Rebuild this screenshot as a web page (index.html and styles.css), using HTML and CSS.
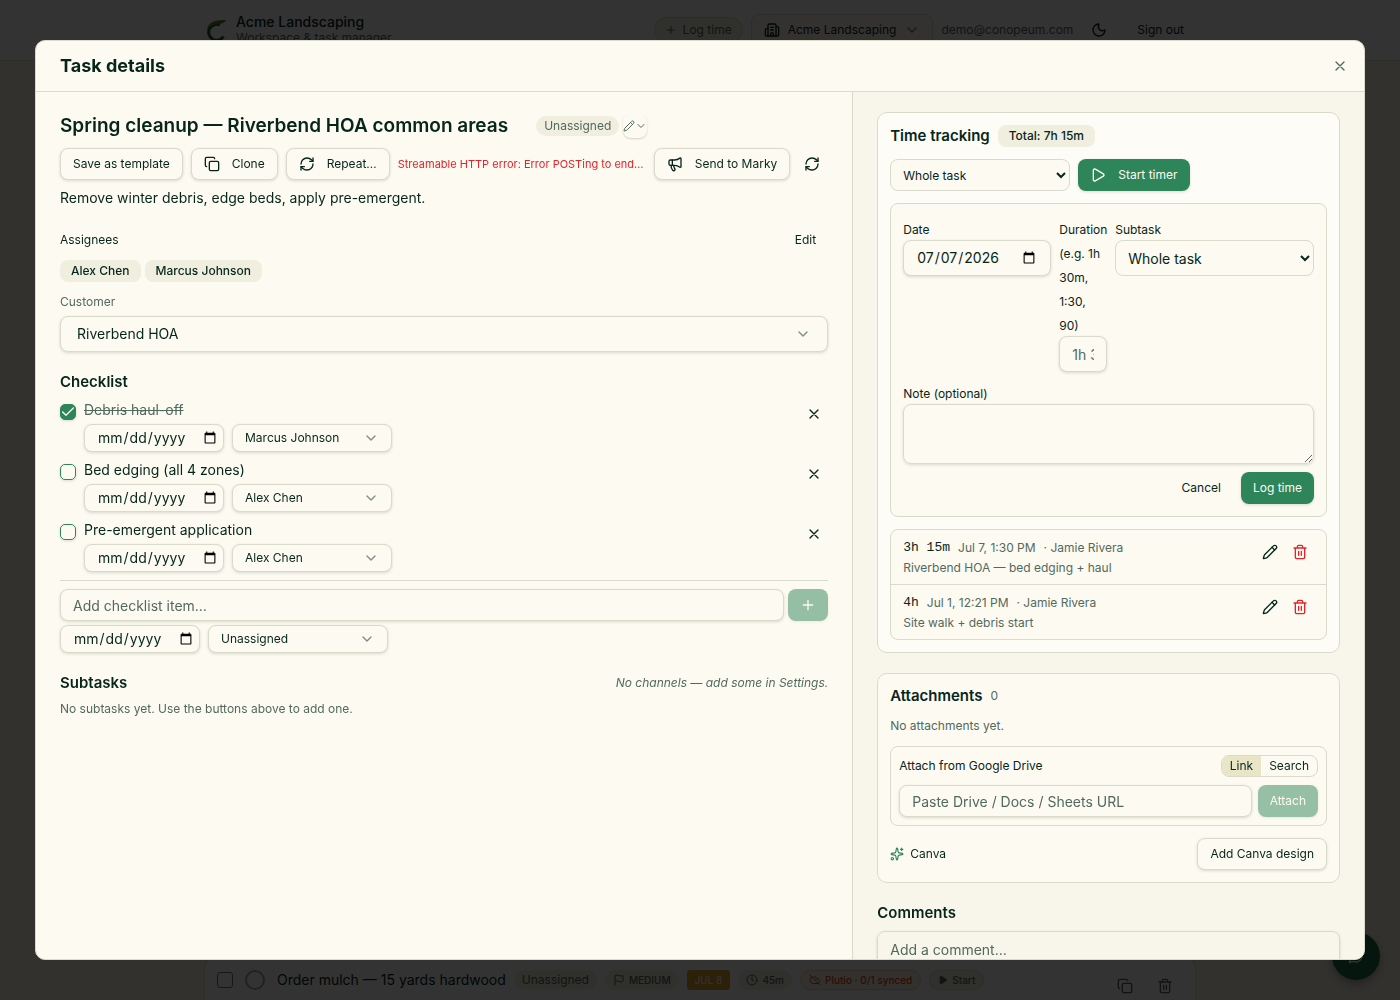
FILE: index.html
```html
<!DOCTYPE html>
<html lang="en">
<head>
<meta charset="utf-8">
<meta name="viewport" content="width=device-width, initial-scale=1">
<title>Task details</title>
<link rel="stylesheet" href="styles.css">
</head>
<body>
<svg class="sprite" aria-hidden="true">
  <symbol id="plus" viewBox="0 0 24 24"><path d="M5 12h14M12 5v14"/></symbol>
  <symbol id="x" viewBox="0 0 24 24"><path d="M18 6 6 18M6 6l12 12"/></symbol>
  <symbol id="chevron" viewBox="0 0 24 24"><path d="m6 9 6 6 6-6"/></symbol>
  <symbol id="copy" viewBox="0 0 24 24"><rect x="8" y="8" width="14" height="14" rx="2"/><path d="M4 16c-1.100 0-2-.9-2-2V4c0-1.100.9-2 2-2h10c1.100 0 2 .9 2 2"/></symbol>
  <symbol id="refresh" viewBox="0 0 24 24"><path d="M3 12a9 9 0 0 1 9-9 9.750 9.750 0 0 1 6.740 2.740L21 8"/><path d="M21 3v5h-5"/><path d="M21 12a9 9 0 0 1-9 9 9.750 9.750 0 0 1-6.740-2.740L3 16"/><path d="M8 16H3v5"/></symbol>
  <symbol id="megaphone" viewBox="0 0 24 24"><path d="M11 6a13 13 0 0 0 8.400-2.800A1 1 0 0 1 21 4v12a1 1 0 0 1-1.600.8A13 13 0 0 0 11 14H5a2 2 0 0 1-2-2V8a2 2 0 0 1 2-2z"/><path d="M6 14a12 12 0 0 0 2.400 7.200 2 2 0 0 0 3.200-2.400A8 8 0 0 1 10 14"/><path d="M8 6v8"/></symbol>
  <symbol id="pencil" viewBox="0 0 24 24"><path d="M21.174 6.812a1 1 0 0 0-3.986-3.987L3.842 16.174a2 2 0 0 0-.5.830l-1.321 4.352a.5.5 0 0 0 .623.622l4.353-1.320a2 2 0 0 0 .830-.497z"/><path d="m15 5 4 4"/></symbol>
  <symbol id="trash" viewBox="0 0 24 24"><path d="M3 6h18M19 6v14a2 2 0 0 1-2 2H7a2 2 0 0 1-2-2V6M8 6V4a2 2 0 0 1 2-2h4a2 2 0 0 1 2 2v2M10 11v6M14 11v6"/></symbol>
  <symbol id="play" viewBox="0 0 24 24"><path d="M5 5a2 2 0 0 1 3.008-1.728l11.997 6.998a2 2 0 0 1 .003 3.458l-12 7A2 2 0 0 1 5 19z"/></symbol>
  <symbol id="sparkles" viewBox="0 0 24 24"><path d="M11.017 2.814a1 1 0 0 1 1.966 0l1.051 5.558a2 2 0 0 0 1.594 1.594l5.558 1.051a1 1 0 0 1 0 1.966l-5.558 1.051a2 2 0 0 0-1.594 1.594l-1.051 5.558a1 1 0 0 1-1.966 0l-1.051-5.558a2 2 0 0 0-1.594-1.594l-5.558-1.051a1 1 0 0 1 0-1.966l5.558-1.051a2 2 0 0 0 1.594-1.594z"/><path d="M20 2v4M22 4h-4"/><circle cx="4" cy="20" r="2"/></symbol>
  <symbol id="building" viewBox="0 0 24 24"><path d="M10 12h4M10 8h4M14 21v-3a2 2 0 0 0-4 0v3"/><path d="M6 10H4a2 2 0 0 0-2 2v7a2 2 0 0 0 2 2h16a2 2 0 0 0 2-2V9a2 2 0 0 0-2-2h-2"/><path d="M6 21V5a2 2 0 0 1 2-2h8a2 2 0 0 1 2 2v16"/></symbol>
  <symbol id="moon" viewBox="0 0 24 24"><path d="M20.985 12.486a9 9 0 1 1-9.473-9.472c.405-.022.617.460.402.803a6 6 0 0 0 8.268 8.268c.344-.215.825-.004.803.401"/></symbol>
  <symbol id="flag" viewBox="0 0 24 24"><path d="M4 22V4a1 1 0 0 1 .4-.8A6 6 0 0 1 8 2c3 0 5 2 7.333 2q2 0 3.067-.8A1 1 0 0 1 20 4v10a1 1 0 0 1-.4.8A6 6 0 0 1 16 16c-3 0-5-2-8-2a6 6 0 0 0-4 1.528"/></symbol>
  <symbol id="clock" viewBox="0 0 24 24"><circle cx="12" cy="12" r="10"/><path d="M12 6v6l4 2"/></symbol>
  <symbol id="cloud-off" viewBox="0 0 24 24"><path d="m2 2 20 20M5.782 5.782A7 7 0 0 0 9 19h8.500a4.500 4.500 0 0 0 1.307-.193M21.532 16.500A4.500 4.500 0 0 0 17.500 10h-1.790A7.008 7.008 0 0 0 10 5.070"/></symbol>
  <symbol id="chat" viewBox="0 0 24 24"><path d="M7.900 20A9 9 0 1 0 4 16.100L2 22Z"/></symbol>
</svg>

<div class="page">
  <header class="topbar">
    <div class="topbar-inner">
      <svg class="logo" viewBox="0 0 22 24" aria-hidden="true"><path d="M17.500 18.500A8 8 0 1 1 14 7" fill="none" stroke="#1b5638" stroke-width="3"/><path d="M1 12C2 4 9 2 20 2c-2 4-6 4-10 4.500C6 7 3 9 1 12z" fill="#5b7d2c"/></svg>
      <div class="brand"><strong>Acme Landscaping</strong><span>Workspace &amp; task manager</span></div>
      <button class="pill-btn"><svg class="icon s12"><use href="#plus"/></svg>Log time</button>
      <button class="org-btn"><svg class="icon"><use href="#building"/></svg>Acme Landscaping<svg class="icon faint"><use href="#chevron"/></svg></button>
      <span class="email">demo@conopeum.com</span>
      <button class="icon-btn moon" aria-label="Dark mode"><svg class="icon"><use href="#moon"/></svg></button>
      <button class="ghost">Sign out</button>
    </div>
  </header>
  <main class="board">
    <div class="task-row">
      <input type="checkbox" class="plain-check" aria-label="Select task">
      <input type="radio" class="ring" aria-label="Complete task">
      <span class="task-name">Order mulch — 15 yards hardwood</span>
      <span class="tag big">Unassigned</span>
      <span class="tag"><svg class="icon s12"><use href="#flag"/></svg>MEDIUM</span>
      <span class="tag due">JUL 8</span>
      <span class="tag"><svg class="icon s12"><use href="#clock"/></svg>45m</span>
      <span class="tag sync"><svg class="icon s12"><use href="#cloud-off"/></svg>Plutio · 0/1 synced</span>
      <button class="tag start"><svg class="icon s10 solid"><use href="#play"/></svg>Start</button>
      <span class="row-tools">
        <button class="icon-btn" aria-label="Duplicate"><svg class="icon"><use href="#copy"/></svg></button>
        <button class="icon-btn" aria-label="Delete"><svg class="icon"><use href="#trash"/></svg></button>
      </span>
    </div>
  </main>
  <button class="fab" aria-label="Chat"><svg class="icon"><use href="#chat"/></svg></button>
</div>

<div class="overlay">
  <section class="modal" role="dialog" aria-modal="true" aria-labelledby="dialog-title">
    <header class="modal-head">
      <h2 id="dialog-title">Task details</h2>
      <button class="close" aria-label="Close"><svg class="icon"><use href="#x"/></svg></button>
    </header>
    <div class="modal-body">
      <div class="main-col">
        <div class="title-row">
          <h2>Spring cleanup — Riverbend HOA common areas</h2>
          <div class="assign">
            <span class="badge">Unassigned</span>
            <button class="mini" aria-label="Change assignee"><svg class="icon s12"><use href="#pencil"/></svg><svg class="icon s12"><use href="#chevron"/></svg></button>
          </div>
        </div>
        <div class="actions">
          <button class="btn">Save as template</button>
          <button class="btn"><svg class="icon"><use href="#copy"/></svg>Clone</button>
          <button class="btn"><svg class="icon"><use href="#refresh"/></svg>Repeat…</button>
          <span class="error">Streamable HTTP error: Error POSTing to end…</span>
          <button class="btn push"><svg class="icon"><use href="#megaphone"/></svg>Send to Marky</button>
          <button class="icon-btn wide" aria-label="Refresh"><svg class="icon"><use href="#refresh"/></svg></button>
        </div>
        <p class="desc">Remove winter debris, edge beds, apply pre-emergent.</p>
        <div class="assignees">
          <span class="label">Assignees</span>
          <button class="ghost">Edit</button>
        </div>
        <div class="chips"><span class="chip">Alex Chen</span><span class="chip">Marcus Johnson</span></div>
        <label class="label muted customer-label" for="customer">Customer</label>
        <select id="customer" class="select large"><option>Riverbend HOA</option></select>

        <h3 class="checklist-title">Checklist</h3>
        <ul class="checklist">
          <li>
            <input type="checkbox" class="check" id="c1" checked>
            <div class="item"><label for="c1" class="done">Debris haul-off</label>
              <div class="pair"><input type="date" class="date" aria-label="Due date"><select class="select" aria-label="Assignee"><option>Marcus Johnson</option></select></div></div>
            <button class="icon-btn" aria-label="Remove"><svg class="icon"><use href="#x"/></svg></button>
          </li>
          <li>
            <input type="checkbox" class="check" id="c2">
            <div class="item"><label for="c2">Bed edging (all 4 zones)</label>
              <div class="pair"><input type="date" class="date" aria-label="Due date"><select class="select" aria-label="Assignee"><option>Alex Chen</option></select></div></div>
            <button class="icon-btn" aria-label="Remove"><svg class="icon"><use href="#x"/></svg></button>
          </li>
          <li>
            <input type="checkbox" class="check" id="c3">
            <div class="item"><label for="c3">Pre-emergent application</label>
              <div class="pair"><input type="date" class="date" aria-label="Due date"><select class="select" aria-label="Assignee"><option>Alex Chen</option></select></div></div>
            <button class="icon-btn" aria-label="Remove"><svg class="icon"><use href="#x"/></svg></button>
          </li>
        </ul>
        <div class="add-item">
          <div class="add-line">
            <input type="text" class="field" placeholder="Add checklist item…" aria-label="Add checklist item">
            <button class="btn primary add" disabled aria-label="Add"><svg class="icon"><use href="#plus"/></svg></button>
          </div>
          <div class="pair"><input type="date" class="date" aria-label="Due date"><select class="select mid" aria-label="Assignee"><option>Unassigned</option></select></div>
        </div>
        <div class="sub-head"><h3>Subtasks</h3><em>No channels — add some in Settings.</em></div>
        <p class="note">No subtasks yet. Use the buttons above to add one.</p>
      </div>

      <aside class="side-col">
        <section class="card time">
          <div class="card-head"><h3>Time tracking</h3><span class="chip">Total: 7h 15m</span></div>
          <div class="pair">
            <select class="native small" aria-label="Timer target"><option>Whole task</option></select>
            <button class="btn primary"><svg class="icon"><use href="#play"/></svg>Start timer</button>
          </div>
          <form class="panel log-form">
            <div class="log-grid">
              <div class="log-field"><label for="log-date">Date</label><input id="log-date" type="date" class="date tall" value="2026-07-07"></div>
              <div class="log-field"><label for="log-dur">Duration (e.g. 1h 30m, 1:30, 90)</label><input id="log-dur" type="text" class="field tall" placeholder="1h 30m"></div>
              <div class="log-field"><label for="log-sub">Subtask</label><select id="log-sub" class="native"><option>Whole task</option></select></div>
            </div>
            <div class="log-field"><label for="log-note">Note (optional)</label><textarea id="log-note" class="field area"></textarea></div>
            <div class="form-actions"><button type="button" class="ghost">Cancel</button><button type="button" class="btn primary">Log time</button></div>
          </form>
          <ul class="panel entries">
            <li>
              <div><div class="entry-line"><span class="mono">3h 15m</span><span>Jul 7, 1:30 PM</span><span>· Jamie Rivera</span></div><p>Riverbend HOA — bed edging + haul</p></div>
              <span class="entry-tools"><button class="icon-btn" aria-label="Edit entry"><svg class="icon"><use href="#pencil"/></svg></button><button class="icon-btn danger" aria-label="Delete entry"><svg class="icon"><use href="#trash"/></svg></button></span>
            </li>
            <li>
              <div><div class="entry-line"><span class="mono">4h</span><span>Jul 1, 12:21 PM</span><span>· Jamie Rivera</span></div><p>Site walk + debris start</p></div>
              <span class="entry-tools"><button class="icon-btn" aria-label="Edit entry"><svg class="icon"><use href="#pencil"/></svg></button><button class="icon-btn danger" aria-label="Delete entry"><svg class="icon"><use href="#trash"/></svg></button></span>
            </li>
          </ul>
        </section>

        <section class="card files">
          <div class="card-head"><h3>Attachments</h3><span class="count">0</span></div>
          <p class="note">No attachments yet.</p>
          <div class="panel drive">
            <div class="between"><label class="label" for="drive-url">Attach from Google Drive</label><div class="tabs"><button class="on">Link</button><button>Search</button></div></div>
            <div class="drive-line"><input id="drive-url" type="text" class="field" placeholder="Paste Drive / Docs / Sheets URL"><button class="btn primary" disabled>Attach</button></div>
          </div>
          <div class="between"><span class="label canva"><svg class="icon s14"><use href="#sparkles"/></svg>Canva</span><button class="btn">Add Canva design</button></div>
        </section>

        <section class="comments">
          <h3><label for="comment">Comments</label></h3>
          <textarea id="comment" class="field area" placeholder="Add a comment…"></textarea>
        </section>
      </aside>
    </div>
  </section>
</div>
</body>
</html>
```

FILE: styles.css
```css
:root {
  --ink: #06261b;
  --muted: #526a5d;
  --paper: #fdfaf1;
  --side: #f8f6ea;
  --line: #dadacb;
  --soft: #f0eedf;
  --green: #2f855a;
  --red: #e3242b;
  --shadow: 0 1px 3px rgba(40, 50, 30, .16);
  --ui: Inter, "Noto Sans", sans-serif;
}
* { box-sizing: border-box; }
body { margin: 0; font: 14px/20px var(--ui); color: var(--ink); background: #fdf4e7; }
h2, h3, p, ul { margin: 0; padding: 0; }
ul { list-style: none; }
h2 { font-size: 18px; line-height: 28px; font-weight: 700; }
h3 { font-size: 15px; line-height: 20px; font-weight: 600; }
button, input, select, textarea { font: inherit; color: inherit; margin: 0; }
button { background: none; border: 0; padding: 0; }
.sprite { display: none; }
.icon { width: 16px; height: 16px; flex: none; fill: none; stroke: currentColor; stroke-width: 2; stroke-linecap: round; stroke-linejoin: round; }
.s10 { width: 10px; height: 10px; }
.s12 { width: 12px; height: 12px; }
.s14 { width: 14px; height: 14px; }
.solid { fill: currentColor; }
.faint { opacity: .6; }

/* Page behind the dialog */
.page { height: 100vh; overflow: hidden; display: flex; flex-direction: column; }
.topbar { background: #fff; border-bottom: 1px solid var(--line); }
.topbar-inner { max-width: 992px; height: 60px; margin: 0 auto; display: flex; align-items: center; font-size: 12px; }
.logo { width: 22px; height: 24px; margin: 0 8px 0 2px; }
.brand { display: flex; flex-direction: column; margin-right: auto; line-height: 16px; color: var(--muted); }
.brand strong { font-size: 14px; font-weight: 500; color: var(--ink); }
.pill-btn { display: flex; align-items: center; gap: 6px; height: 26px; padding: 0 10px; margin-right: 8px; border: 1px solid var(--line); border-radius: 13px; background: #f1efdf; color: var(--muted); }
.org-btn { display: flex; align-items: center; gap: 8px; height: 32px; padding: 0 12px; margin-right: 8px; border: 1px solid var(--line); border-radius: 8px; background: #fdfaf1; }
.email { color: var(--muted); }
.icon-btn.moon { margin: 0 12px; }
.board { flex: 1; width: 100%; max-width: 992px; margin: 0 auto; display: flex; flex-direction: column; justify-content: flex-end; }
.task-row { display: flex; align-items: center; gap: 8px; height: 44px; padding: 2px 16px 0 12px; background: #fff; border: 1px solid var(--line); border-bottom: 0; border-radius: 12px 12px 0 0; }
.plain-check { appearance: none; width: 16px; height: 16px; border: 1px solid #6b7280; border-radius: 3px; }
.ring { appearance: none; width: 20px; height: 20px; margin: 0 4px; border: 2px solid #9ca3af; border-radius: 50%; }
.tag { display: flex; align-items: center; gap: 4px; height: 20px; padding: 0 8px; border-radius: 10px; background: var(--soft); color: var(--muted); font-size: 10px; font-weight: 500; white-space: nowrap; }
.tag.big { font-size: 12px; font-weight: 400; }
.tag.due { border-radius: 3px; background: #dca22c; color: #fdf4e0; }
.tag.sync { border: 1px solid #f5cfa0; background: #fff3e2; color: #d9480f; }
.tag.start { border: 1px solid var(--line); }
.task-name { white-space: nowrap; }
.row-tools { display: flex; gap: 12px; margin-left: auto; padding-top: 12px; color: var(--muted); }
.fab { position: fixed; right: 20px; bottom: 20px; width: 48px; height: 48px; border-radius: 50%; background: #1c7047; color: #fff; display: grid; place-items: center; box-shadow: 0 4px 10px rgba(0, 0, 0, .3); }

/* Dialog frame */
.overlay { position: fixed; inset: 0; display: grid; place-items: center; background: rgba(0, 0, 0, .8); }
.modal { width: 95vw; height: 92vh; display: flex; flex-direction: column; overflow: hidden; border: 1px solid var(--line); border-radius: 10px; background: var(--paper); }
.modal-head { display: flex; align-items: center; justify-content: space-between; padding: 11px 16px 11px 24px; border-bottom: 1px solid var(--line); }
.close { display: grid; color: var(--muted); }
.modal-body { flex: 1; min-height: 0; display: grid; grid-template-columns: 8fr 5fr; }
.main-col { min-width: 0; padding: 20px 24px; border-right: 1px solid var(--line); overflow: hidden; }
.side-col { min-width: 0; display: flex; flex-direction: column; gap: 20px; padding: 20px 24px; background: var(--side); overflow: hidden; }
.side-col > * { flex: none; }

/* Controls */
.btn { display: inline-flex; align-items: center; justify-content: center; gap: 12px; height: 32px; padding: 0 12px; border: 1px solid var(--line); border-radius: 8px; background: var(--paper); font-size: 12px; white-space: nowrap; box-shadow: var(--shadow); }
.btn.primary { background: var(--green); border: 0; color: #fdfaf1; }
.btn:disabled { opacity: .5; }
.ghost { height: 32px; padding: 0 12px; font-size: 12px; }
.icon-btn { width: 28px; height: 28px; display: grid; place-items: center; flex: none; }
.icon-btn.wide { width: 32px; }
.danger { color: var(--red); }
.field, .date, .select, .native { border: 1px solid var(--line); border-radius: 8px; background-color: var(--paper); }
.field, .date, .select { box-shadow: var(--shadow); }
.field { width: 100%; min-width: 0; height: 32px; padding: 4px 12px; }
.field::placeholder { color: var(--muted); opacity: 1; }
.date { width: 140px; height: 28px; padding: 0 4px 0 12px; }
.tall.date { width: 100%; padding-right: 12px; }
.tall { height: 36px; }
.select { appearance: none; width: 160px; height: 28px; padding: 0 12px; font-size: 12px; background-image: url("data:image/svg+xml,%3Csvg xmlns='http://www.w3.org/2000/svg' width='16' height='16' viewBox='0 0 24 24' fill='none' stroke='%237d8d82' stroke-width='2' stroke-linecap='round' stroke-linejoin='round'%3E%3Cpath d='m6 9 6 6 6-6'/%3E%3C/svg%3E"); background-repeat: no-repeat; background-position: right 12px center; }
.select.mid { width: 180px; }
.select.large { display: block; width: 100%; height: 36px; padding: 0 16px; font-size: 14px; background-position: right 16px center; }
.native { width: 100%; height: 36px; padding: 0 8px; }
.native.small { width: 180px; height: 32px; font-size: 12px; }
.label { font-size: 12px; line-height: 16px; }
.muted { color: var(--muted); }
.note { font-size: 12px; line-height: 16px; color: var(--muted); }
.chip { display: inline-flex; align-items: center; height: 22px; padding: 0 11px; border-radius: 8px; background: var(--soft); font-size: 12px; font-weight: 500; }
.pair { display: flex; gap: 8px; }
.between { display: flex; align-items: center; justify-content: space-between; }

/* Task column */
.title-row { display: flex; align-items: center; gap: 28px; }
.title-row h2 { font-size: 19px; font-weight: 600; }
.assign { display: flex; align-items: center; gap: 4px; }
.badge { height: 20px; padding: 0 8px; border-radius: 10px; background: var(--soft); color: var(--muted); font-size: 12px; }
.mini { display: flex; align-items: center; width: 24px; height: 24px; border-radius: 8px; color: var(--muted); box-shadow: 0 1px 2px rgba(40, 50, 30, .2); }
.actions { display: flex; align-items: center; gap: 8px; margin-top: 8px; }
.error { color: var(--red); font-size: 11px; white-space: nowrap; }
.push { margin-left: auto; }
.push + .icon-btn { margin-left: -2px; }
.desc { margin-top: 8px; }
.assignees { display: flex; align-items: center; justify-content: space-between; margin-top: 16px; }
.chips { display: flex; gap: 4px; margin-top: 4px; }
.customer-label { display: block; margin: 12px 0 6px; }
.checklist-title { margin-top: 20px; }
.checklist { display: grid; gap: 8px; margin-top: 8px; }
.checklist li { display: flex; gap: 8px; }
.check { appearance: none; flex: none; width: 16px; height: 16px; margin-top: 4px; border: 1px solid var(--green); border-radius: 5px; box-shadow: var(--shadow); }
.check:checked { background: var(--green) url("data:image/svg+xml,%3Csvg xmlns='http://www.w3.org/2000/svg' viewBox='0 0 24 24' fill='none' stroke='%23fdfaf1' stroke-width='2' stroke-linecap='round' stroke-linejoin='round'%3E%3Cpath d='M20 6 9 17l-5-5'/%3E%3C/svg%3E") center / 16px no-repeat; }
.item { flex: 1; display: grid; gap: 4px; }
.done { color: var(--muted); text-decoration: line-through; }
.add-item { display: grid; gap: 4px; margin-top: 8px; padding-top: 8px; border-top: 1px solid var(--line); }
.add-line { display: flex; gap: 4px; }
.add { width: 40px; flex: none; }
.sub-head { display: flex; align-items: center; justify-content: space-between; margin: 20px 0 8px; }
.sub-head em { font-size: 12px; color: var(--muted); }

/* Side column */
.card { display: grid; gap: 12px; padding: 12px; border: 1px solid var(--line); border-radius: 10px; background: var(--paper); }
.card.time { background: #fdfcf7; }
.card-head { display: flex; align-items: center; gap: 8px; }
.count { font-size: 12px; color: var(--muted); }
.panel { border: 1px solid var(--line); border-radius: 8px; background: var(--paper); }
.log-form { display: grid; gap: 8px; padding: 12px; }
.log-grid { display: grid; grid-template-columns: 148px 48px 1fr; gap: 8px; }
.log-field { font-size: 16px; line-height: 24px; }
.log-field label { font-size: 12px; line-height: 16px; }
.log-field .field, .log-field .date, .log-field .native { display: block; font-size: 14px; line-height: 20px; }
.field.area { display: block; height: 60px; padding: 8px 12px; background: transparent; }
.form-actions { display: flex; justify-content: flex-end; gap: 8px; }
.entries li { display: flex; justify-content: space-between; padding: 8px 12px; font-size: 12px; line-height: 16px; color: var(--muted); }
.entries li + li { border-top: 1px solid var(--line); }
.entry-line { display: flex; gap: 8px; margin-bottom: 2px; line-height: 20px; }
.mono { font-family: "Liberation Mono", monospace; font-size: 13px; color: var(--ink); }
.entry-tools { display: flex; gap: 2px; color: var(--ink); }
.drive { display: grid; gap: 8px; padding: 8px; }
.drive-line { display: flex; gap: 6px; }
.tabs { display: flex; overflow: hidden; height: 22px; border: 1px solid var(--line); border-radius: 8px; }
.tabs button { padding: 0 8px; font-size: 12px; }
.tabs .on { background: #e9e6c8; }
.canva { display: flex; align-items: center; gap: 6px; }
.canva .icon { color: var(--green); }
.comments { display: grid; gap: 8px; }
```
